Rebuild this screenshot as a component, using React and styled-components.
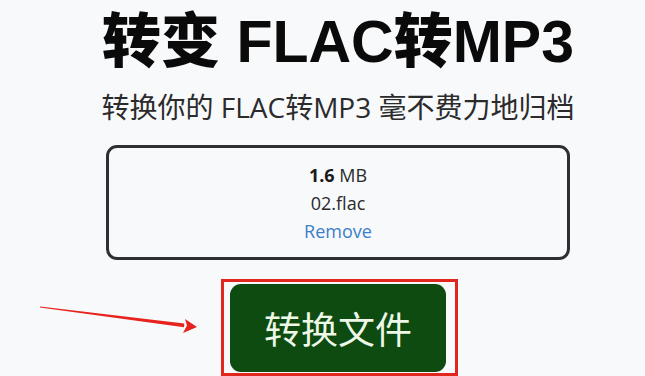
import { styled, createGlobalStyle } from "styled-components";

const GlobalStyle = createGlobalStyle`
  html, body {
    margin: 0;
    padding: 0;
    background: #f8f9fb;
  }
  body {
    font-family: "Open Sans", "Noto Sans CJK SC", sans-serif;
    color: #212529;
  }
`;

const Page = styled.main`
  position: relative;
  width: 645px;
  height: 376px;
  overflow: hidden;
  box-sizing: border-box;
  padding: 6px 0 0 31px;
  display: flex;
  flex-direction: column;
  align-items: center;
`;

const Title = styled.h1`
  margin: 0;
  font-family: "Liberation Sans", "Noto Sans CJK SC", sans-serif;
  font-weight: 900;
  font-size: 59px;
  line-height: 72px;
  color: #0a0a0a;
  white-space: nowrap;
`;

const Subtitle = styled.p`
  margin: 10px 0 0;
  font-size: 28px;
  line-height: 38px;
  font-weight: 400;
  color: #2b2b2b;
  white-space: nowrap;
`;

const FileCard = styled.section`
  margin-top: 19px;
  width: 464px;
  box-sizing: border-box;
  border: 3px solid #2f2f2f;
  border-radius: 11px;
  padding: 13px 0 12px;
  text-align: center;
  font-size: 18px;
  line-height: 28px;
  color: #2a2a2a;
`;

const Line = styled.div`
  b {
    font-weight: 700;
    color: #1a1a1a;
  }
`;

const RemoveLink = styled.a`
  color: #3a7fc8;
  text-decoration: none;
  cursor: pointer;
`;

const Highlight = styled.div`
  margin-top: 19px;
  margin-left: 3px;
  border: 3px solid #e1261f;
  padding: 2px 9px 1px 6px;
  display: flex;
`;

const ConvertButton = styled.button`
  width: 216px;
  height: 88px;
  border: none;
  border-radius: 11px;
  background: #0e4b10;
  color: #eef8e8;
  font-family: "Noto Sans CJK SC", sans-serif;
  font-size: 37px;
  font-weight: 400;
  cursor: pointer;
`;

const Arrow = styled.svg`
  position: absolute;
  left: 0;
  top: 300px;
`;

export default function App() {
  return (
    <>
      <GlobalStyle />
      <Page>
        <Title>转变 FLAC转MP3</Title>
        <Subtitle>转换你的 FLAC转MP3 毫不费力地归档</Subtitle>
        <FileCard>
          <Line>
            <b>1.6</b> MB
          </Line>
          <Line>02.flac</Line>
          <Line>
            <RemoveLink>Remove</RemoveLink>
          </Line>
        </FileCard>
        <Highlight>
          <ConvertButton>转换文件</ConvertButton>
        </Highlight>
        <Arrow width="210" height="40" viewBox="0 0 210 40">
          <polygon points="40,6.6 40,7.4 184,27.3 184.3,23.4" fill="#e6231c" />
          <polygon points="197,27 185,19 187,25.5 183,33" fill="#e6231c" />
        </Arrow>
      </Page>
    </>
  );
}
